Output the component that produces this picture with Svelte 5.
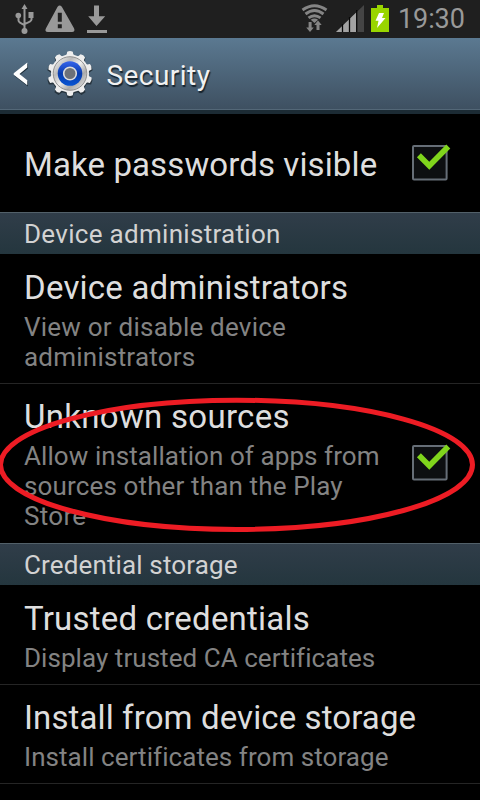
<script>
  const teeth = Array.from({ length: 10 }, (_, i) => i * 36);
</script>

{#snippet check()}
  <svg class="check" width="44" height="44" viewBox="0 0 44 44">
    <rect x="5" y="8" width="33.6" height="33.6" rx="1" fill="#0d0f11" stroke="#666e77" stroke-width="2" />
    <path d="M10.6 17.600 L21 28 L40 8.800" transform="translate(.3 -.3)" fill="none" stroke="#80d51c" stroke-width="5.600" />
  </svg>
{/snippet}

<div class="screen">
  <div class="status">
    <svg width="120" height="38" viewBox="0 0 120 38">
      <g fill="none" stroke="#999" stroke-width="2">
        <path d="M24.500 8V31M18.500 17v3.500q0 2 6 4.500M31.500 16v3.500q0 2-7 4.500" />
      </g>
      <g fill="#999">
        <path d="M24.500 4l3 5h-6zM28.500 12h5v6h-5z" />
        <circle cx="18.300" cy="15.500" r="2.800" /><circle cx="24.500" cy="31" r="3" />
        <path fill-rule="evenodd" d="M57.600 6.800q2-2.800 4.200 0L74 28.200q1.500 3.600-2 3.800H48q-3.800-.2-2-3.800zM57.800 12.800v9h4v-9zM57.800 24.200v4h4v-4z" />
        <path d="M94 5.500h5v10.800h6.200L96.500 26l-8.300-9.700H94zM87 30h20v3H87z" />
      </g>
    </svg>
    <div class="right">
      <svg width="96" height="38" viewBox="300 0 96 38">
        <g fill="none" stroke="#858585" stroke-width="2.900">
          <path d="M302.500 10q12-8.500 24 0M305.500 14q9-7 18 0M308.500 17.900q6-4.500 12 0" />
        </g>
        <path d="M310.700 19.700q3.700-2.500 7.400 0L314.500 23z" fill="#858585" />
        <path d="M308.600 22h3v5.500h2.200L310 32l-3.800-4.500h2.400zM316.500 30h3v-5h2.200L318 20.500 314.300 25h2.200z" fill="#858585" />
        <path d="M336 32L364 5v27z" fill="#454545" />
        <path d="M336 32L357 11.700V32z" fill="#a3a3a3" />
        <path d="M342.500 24v8M349.500 17v15M356.700 10v22" stroke="#080808" stroke-width="1.300" />
        <path d="M371 8h6V5h6v3h6v24h-18z" fill="#99d500" />
        <path d="M379 13h5l-2 5h3.500L377 28l1.500-7.300H375.500z" fill="#fff" />
      </svg>
      <span class="clock">19:30</span>
    </div>
  </div>

  <header>
    <svg width="100" height="76" viewBox="0 38 100 76">
      <path d="M28 63.500v5L19.800 75 28 81.500v5L14.500 76v-2z" fill="#1b2c38" />
      <path d="M27.300 62.500v5L19.500 74l7.800 6.300v5L13.700 74.800v-1.600z" fill="#fff" />
      <defs>
        <linearGradient id="metal" x1="0" y1="0" x2="1" y2="1">
          <stop offset="0" stop-color="#fff" /><stop offset=".3" stop-color="#bbb" /><stop offset=".5" stop-color="#eee" /><stop offset=".7" stop-color="#aaa" /><stop offset="1" stop-color="#f5f5f5" />
        </linearGradient>
        <linearGradient id="blue" x1="0" y1="0" x2="0" y2="1">
          <stop offset="0" stop-color="#3765ed" /><stop offset=".5" stop-color="#083cad" /><stop offset="1" stop-color="#0754d3" />
        </linearGradient>
      </defs>
      <g fill="#26333d" transform="translate(0 1)">
        {#each teeth as a}<path d="M66 56l1.500-5h5l1.500 5z" transform="rotate({a} 70 74)" />{/each}
        <circle cx="70" cy="74" r="19" />
      </g>
      <g fill="#eee">
        {#each teeth as a}<path d="M65.500 56q1.500-1 1.700-4.300q2.800-1.600 5.600 0q.2 3.300 1.700 4.300z" transform="rotate({a} 70 73.500)" />{/each}
        <circle cx="70" cy="73.500" r="19" />
      </g>
      <circle cx="70" cy="73.500" r="16.800" fill="url(#metal)" stroke="#888" stroke-width=".9" />
      <circle cx="70" cy="73.500" r="12.300" fill="url(#blue)" />
      <circle cx="70" cy="73.500" r="6.300" fill="#6c7179" stroke="#ddd" stroke-width="1.600" />
    </svg>
    <h1>Security</h1>
  </header>

  <div class="row password">
    <div class="title t0">Make passwords visible</div>
    {@render check()}
  </div>

  <div class="section s1">Device administration</div>
  <div class="row first two">
    <div>
      <div class="title t1">Device administrators</div>
      <div class="summary view">View or disable device<br />administrators</div>
    </div>
  </div>
  <div class="row three">
    <div>
      <div class="title t2">Unknown sources</div>
      <div class="summary"><span class="allow">Allow installation of apps from</span><br />sources other than the Play<br /><span class="store">Store</span></div>
    </div>
    {@render check()}
  </div>

  <div class="section s2">Credential storage</div>
  <div class="row first one">
    <div>
      <div class="title t3">Trusted credentials</div>
      <div class="summary display">Display trusted CA certificates</div>
    </div>
  </div>
  <div class="row last">
    <div>
      <div class="title t4">Install from device storage</div>
      <div class="summary install">Install certificates from storage</div>
    </div>
  </div>

  <svg class="ring" width="480" height="140" viewBox="0 395 480 140">
    <ellipse cx="236.500" cy="464.800" rx="236" ry="64.600" fill="none" stroke="#ed1c24" stroke-width="5" />
  </svg>
</div>

<style>
  :global(body) { margin: 0; background: #000; }
  .screen { position: relative; width: 480px; height: 800px; overflow: hidden; background: #000; font-family: Roboto, sans-serif; color: #dedede; }
  svg { display: block; flex: none; }
  .status { height: 38px; background: #1f1f1f; display: flex; justify-content: space-between; }
  .right { display: flex; width: 180px; }
  .clock { font-size: 27px; line-height: 38px; color: #999; margin-left: 2px; letter-spacing: -.1px; white-space: nowrap; }
  header { height: 76px; box-sizing: border-box; display: flex; background: linear-gradient(#5b7991, #3e5061 71px, #536777 71px, #536777 72px, #1c2b34 72px); }
  h1 { margin: 0 0 0 6.500px; font-size: 28px; line-height: 76px; font-weight: 400; color: #f1f1f1; letter-spacing: .45px; text-shadow: 1px 2px 1px #16232d; }
  .row { box-sizing: border-box; display: flex; justify-content: space-between; padding: 11px 24px 0; border-bottom: 1px solid #252525; }
  .row.first { padding-top: 12px; }
  .password { height: 98px; padding-top: 29px; border: 0; }
  .two { height: 130px; }
  .three { height: 159px; border: 0; }
  .one { height: 100px; }
  .last { height: 99px; }
  .title { font-size: 33px; line-height: 44px; white-space: nowrap; letter-spacing: .22px; }
  .t0 { letter-spacing: .11px; }
  .t2 { letter-spacing: .3px; }
  .t4 { letter-spacing: .11px; }
  .summary { font-size: 26px; line-height: 30px; color: #838383; white-space: nowrap; letter-spacing: .14px; margin-top: 2px; }
  .view { letter-spacing: .23px; }
  .allow { letter-spacing: .08px; }
  .store { letter-spacing: .3px; }
  .display { letter-spacing: .05px; }
  .install { letter-spacing: .06px; }
  .section { height: 42px; box-sizing: border-box; border-top: 1px solid #526069; padding-left: 24px; font-size: 26px; line-height: 42px; background: linear-gradient(#303d49, #24363e); color: #d2d2d2; white-space: nowrap; letter-spacing: .3px; }
  .s2 { letter-spacing: .14px; }
  .check { margin-right: 4px; margin-left: -60px; }
  .password .check { margin-top: -5px; }
  .three .check { margin-top: 43px; }
  .ring { position: absolute; left: 0; top: 395px; }
</style>
